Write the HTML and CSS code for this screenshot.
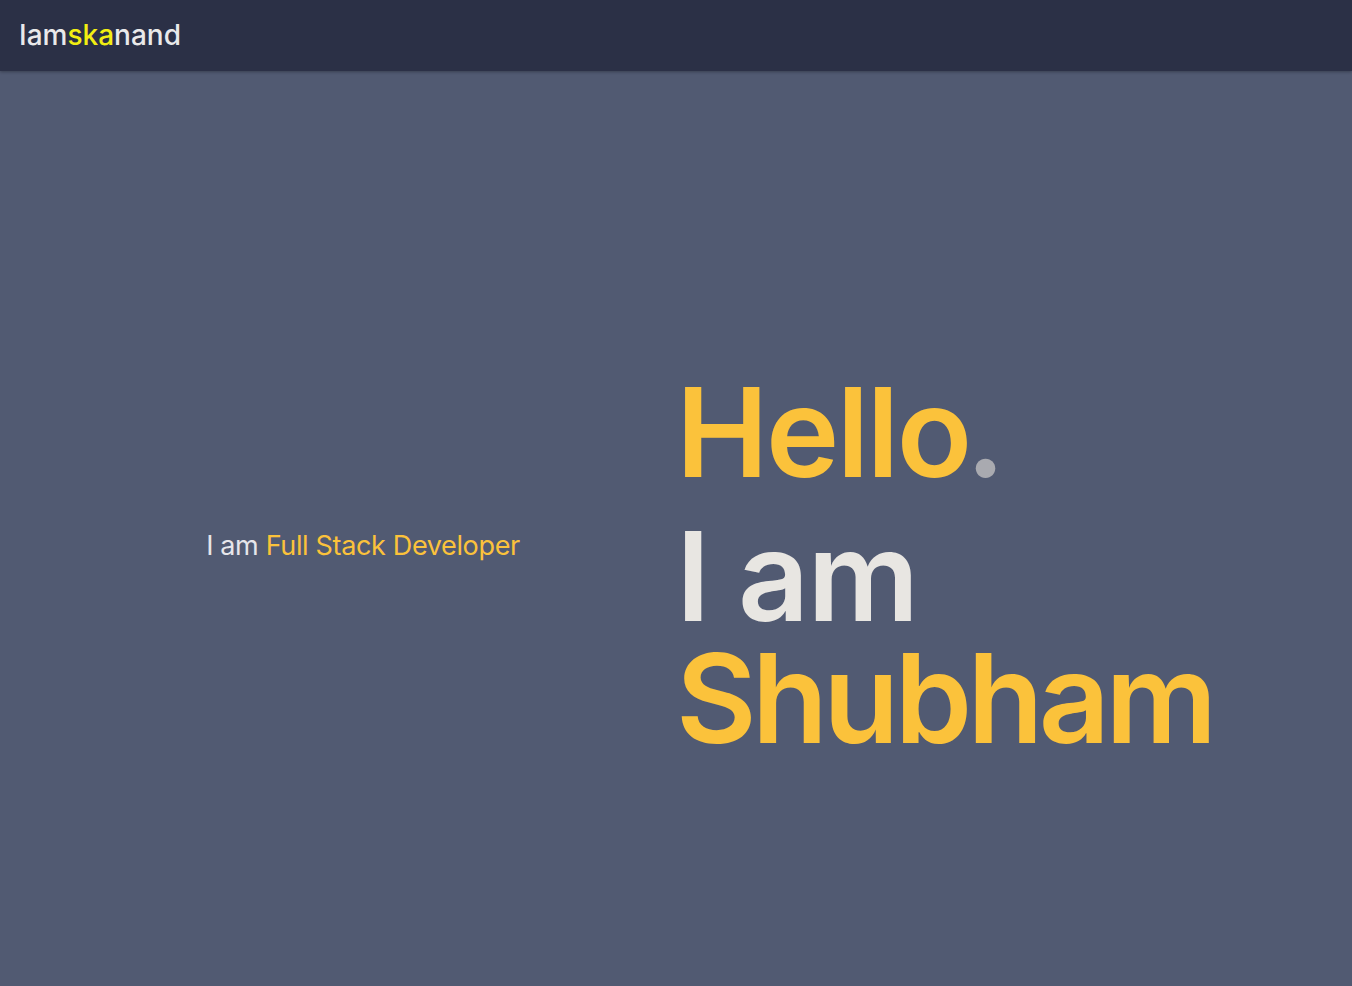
FILE: index.html
```html
<!DOCTYPE html>
<html>
<head>
<meta charset="utf-8">
<link rel="stylesheet" href="styles.css">
</head>
<body>
<header class="nav">
  <div class="logo">Iam<span class="hl">ska</span>nand</div>
</header>
<main class="hero">
  <div class="left">
    <p class="role">I am <span class="y">Full Stack Developer</span></p>
  </div>
  <div class="right">
    <h1 class="hello">Hello<span class="dot">.</span></h1>
    <h2 class="name"><span class="w">I am</span><br><span class="y">Shubham</span></h2>
  </div>
</main>
</body>
</html>
```

FILE: styles.css
```css
* { box-sizing: border-box; }
html, body { margin: 0; padding: 0; }
body {
  background: #515a72;
  font-family: Inter, "Noto Sans", sans-serif;
  height: 986px;
  overflow: hidden;
}
.nav {
  height: 71px;
  background: #2b3046;
  display: flex;
  align-items: center;
  padding-left: 19px;
  box-shadow: 0 1px 3px rgba(0,0,0,0.3);
}
.logo {
  color: #e9e9ea;
  font-size: 28px;
  font-weight: 500;
  line-height: 1;
  margin-top: -2px;
}
.hl { color: #f2ee12; }
.hero {
  display: grid;
  grid-template-columns: 1fr 1fr;
  height: 915px;
  padding-top: 34px;
  align-items: center;
}
.left {
  display: flex;
  justify-content: center;
  padding-left: 50px;
}
.role {
  margin: 0;
  color: #e6e6ea;
  font-size: 27px;
  font-weight: 400;
  letter-spacing: -0.35px;
}
.y { color: #fbc23b; }
.right {
  padding-left: 0;
  padding-top: 40px;
}
.hello {
  margin: 0 0 23px;
  color: #fbc23b;
  font-size: 124px;
  font-weight: 600;
  line-height: 120px;
  letter-spacing: -2.5px;
}
.dot { color: #a9aab0; margin-left: -4px; }
.name {
  margin: 0;
  font-size: 124px;
  font-weight: 600;
  line-height: 122px;
  letter-spacing: -4.6px;
}
.w { color: #e8e6e2; letter-spacing: -1.8px; }
```
